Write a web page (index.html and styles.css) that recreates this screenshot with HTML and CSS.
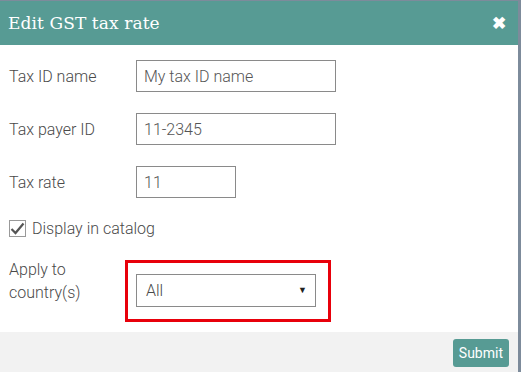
FILE: index.html
```html
<!DOCTYPE html>
<html lang="en">
<head>
    <meta charset="UTF-8">
    <title>Edit GST tax rate</title>
    <link rel="stylesheet" href="styles.css">
</head>
<body>
    <div class="dialog">
        <div class="dialog-header">
            <h1 class="dialog-title">Edit GST tax rate</h1>
            <span class="close">&#10006;</span>
        </div>
        <div class="dialog-body">
            <div class="row">
                <label class="label">Tax ID name</label>
                <input class="field field-wide" type="text" value="My tax ID name">
            </div>
            <div class="row">
                <label class="label">Tax payer ID</label>
                <input class="field field-wide" type="text" value="11-2345">
            </div>
            <div class="row">
                <label class="label">Tax rate</label>
                <input class="field field-short" type="text" value="11">
            </div>
            <div class="check-row">
                <span class="checkbox">
                    <svg width="15" height="13" viewBox="0 0 15 13"><path d="M1.5 7 L5.5 11 L13.5 1.5" fill="none" stroke="#555" stroke-width="2.2"/></svg>
                </span>
                <span class="check-label">Display in catalog</span>
            </div>
            <div class="row row-country">
                <label class="label label-two">Apply to<br>country(s)</label>
                <div class="highlight">
                    <div class="select">
                        <span>All</span>
                        <span class="caret">&#9660;</span>
                    </div>
                </div>
            </div>
        </div>
        <div class="dialog-footer">
            <button class="submit">Submit</button>
        </div>
    </div>
</body>
</html>
```
FILE: styles.css
```css
body {
    margin: 0;
    background: #7d8b9b;
    font-family: Roboto, 'Noto Sans', sans-serif;
    color: #555;
}

.dialog {
    width: 518px;
    height: 371px;
    margin-top: 1px;
    background: #fff;
    display: flex;
    flex-direction: column;
}

.dialog-header {
    flex-shrink: 0;
    height: 44px;
    background: #579b94;
    display: flex;
    align-items: center;
    justify-content: space-between;
    padding: 0 12px 0 8px;
}

.dialog-title {
    margin: 0;
    font-family: 'DejaVu Serif', serif;
    font-weight: normal;
    font-size: 17px;
    color: #fff;
    letter-spacing: 0.1px;
}

.close {
    color: #fff;
    font-size: 17px;
    font-weight: bold;
}

.dialog-body {
    flex: 1;
    min-height: 0;
    padding: 15px 0 0 9px;
}

.row {
    display: flex;
    align-items: center;
    height: 32px;
    margin-bottom: 21px;
}

.label {
    width: 127px;
    font-size: 16px;
    font-weight: 300;
    color: #4a4a4a;
}

.label-two {
    width: 116px;
    line-height: 23px;
    align-self: flex-start;
    margin-top: -2px;
}

.field {
    height: 32px;
    box-sizing: border-box;
    border: 1px solid #8a8a8a;
    padding: 0 7px;
    font-family: Roboto, sans-serif;
    font-weight: 300;
    font-size: 16px;
    color: #555;
    outline: none;
}

.field-wide {
    width: 200px;
}

.field-short {
    width: 100px;
}

.check-row {
    display: flex;
    align-items: center;
    margin-top: 6px;
}

.checkbox {
    width: 17px;
    height: 17px;
    box-sizing: border-box;
    border: 1px solid #999;
    display: flex;
    align-items: center;
    justify-content: center;
    margin-right: 6px;
}

.check-label {
    font-size: 16px;
    font-weight: 300;
    color: #4a4a4a;
}

.row-country {
    height: 61px;
    margin-top: 22px;
    margin-bottom: 0;
}

.highlight {
    border: 3px solid #e8000b;
    padding: 11px 12px 12px 8px;
}

.select {
    width: 180px;
    height: 33px;
    box-sizing: border-box;
    border: 1px solid #8a8a8a;
    display: flex;
    align-items: center;
    justify-content: space-between;
    padding: 0 8px 0 9px;
    font-size: 16px;
    font-weight: 300;
    color: #4a4a4a;
}

.caret {
    font-size: 9px;
    color: #222;
}

.dialog-footer {
    flex-shrink: 0;
    height: 40px;
    background: #f2f2f2;
    display: flex;
    align-items: center;
    justify-content: flex-end;
    padding-right: 9px;
}

.submit {
    background: #579b94;
    color: #fff;
    border: none;
    border-radius: 3px;
    height: 28px;
    padding: 0 6px;
    font-family: Roboto, sans-serif;
    font-size: 14px;
    margin-top: 2px;
}
```
